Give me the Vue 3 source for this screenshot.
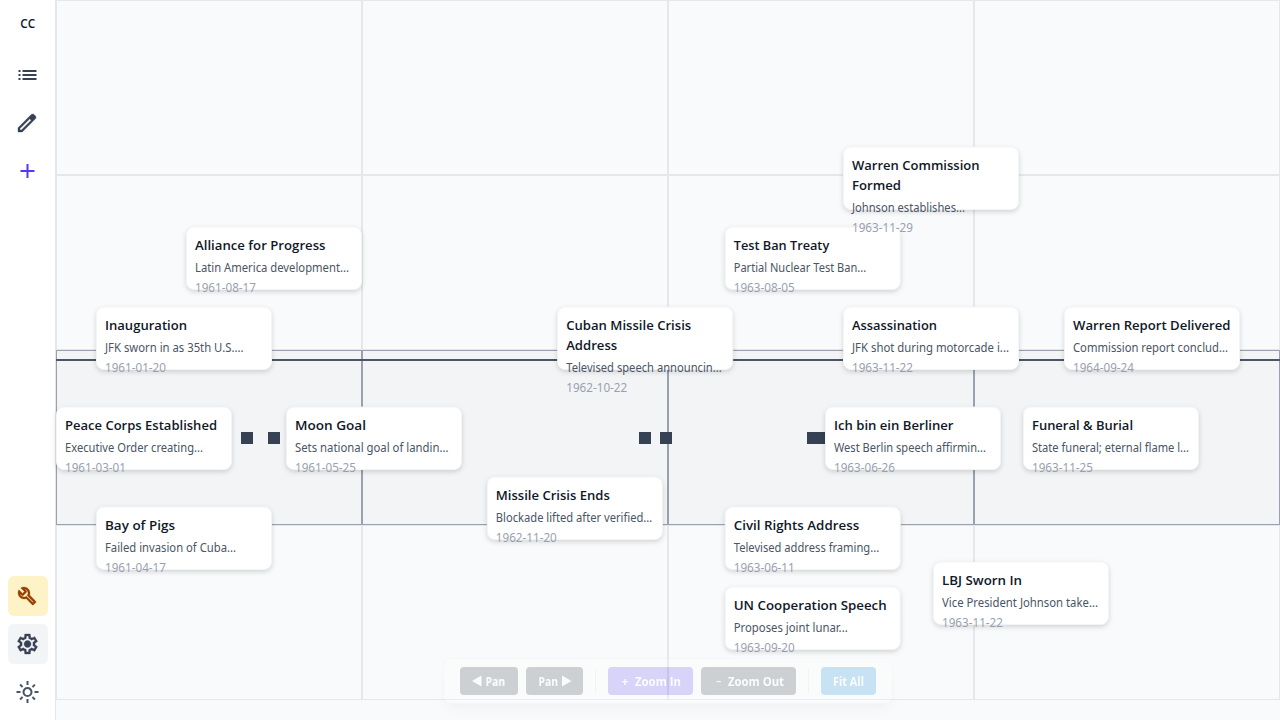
<script setup>
const columns = [0, 306, 612, 918]
const rows = [0, 175, 525]
const markers = [185, 212, 583, 604, 751, 757]

// x / y are canvas coordinates of the card; w values are rendered text widths
const events = [
  { x: 40, y: 306, title: [['Inauguration', 82]], desc: 'JFK sworn in as 35th U.S....', w: 138.5, date: '1961-01-20' },
  { x: 0, y: 406, title: [['Peace Corps Established', 152]], desc: 'Executive Order creating...', w: 138, date: '1961-03-01' },
  { x: 40, y: 506, title: [['Bay of Pigs', 70]], desc: 'Failed invasion of Cuba...', w: 131, date: '1961-04-17' },
  { x: 230, y: 406, title: [['Moon Goal', 71]], desc: 'Sets national goal of landin...', w: 153.5, date: '1961-05-25' },
  { x: 130, y: 226, title: [['Alliance for Progress', 130.5]], desc: 'Latin America development...', w: 154, date: '1961-08-17' },
  { x: 501.2, y: 306, title: [['Cuban Missile Crisis', 125], ['Address', 51]], desc: 'Televised speech announcin...', w: 155.5, date: '1962-10-22' },
  { x: 430.8, y: 476, title: [['Missile Crisis Ends', 114]], desc: 'Blockade lifted after verified...', w: 156.5, date: '1962-11-20' },
  { x: 668.7, y: 506, title: [['Civil Rights Address', 125.5]], desc: 'Televised address framing...', w: 145.5, date: '1963-06-11' },
  { x: 769, y: 406, title: [['Ich bin ein Berliner', 119.5]], desc: 'West Berlin speech affirmin...', w: 152, date: '1963-06-26' },
  { x: 668.7, y: 226, title: [['Test Ban Treaty', 95.5]], desc: 'Partial Nuclear Test Ban...', w: 132.5, date: '1963-08-05' },
  { x: 668.7, y: 586, title: [['UN Cooperation Speech', 153]], desc: 'Proposes joint lunar...', w: 114, date: '1963-09-20' },
  { x: 787, y: 306, title: [['Assassination', 85]], desc: 'JFK shot during motorcade i...', w: 157, date: '1963-11-22' },
  { x: 877, y: 561, title: [['LBJ Sworn In', 80]], desc: 'Vice President Johnson take...', w: 156, date: '1963-11-22' },
  { x: 967, y: 406, title: [['Funeral & Burial', 101]], desc: 'State funeral; eternal flame l...', w: 157, date: '1963-11-25' },
  { x: 787, y: 146, title: [['Warren Commission', 127.5], ['Formed', 49]], desc: 'Johnson establishes...', w: 113, date: '1963-11-29' },
  { x: 1008, y: 306, title: [['Warren Report Delivered', 157.5]], desc: 'Commission report conclud...', w: 155, date: '1964-09-24' },
]
</script>

<template>
  <div class="app">
    <nav class="sidebar">
      <div class="brand"><svg width="40" height="24"><text x="12.3" y="16" textLength="15" lengthAdjust="spacingAndGlyphs">CC</text></svg></div>
      <button class="item"><svg viewBox="0 -960 960 960"><path d="M280-600v-80h560v80H280Zm0 160v-80h560v80H280Zm0 160v-80h560v80H280ZM120-600v-80h80v80h-80Zm0 160v-80h80v80h-80Zm0 160v-80h80v80h-80Z" /></svg></button>
      <button class="item"><svg class="bold" viewBox="0 -960 960 960"><path d="M200-200h57l391-391-57-57-391 391v57Zm-80 80v-170l528-527q12-11 26.5-17t30.5-6q16 0 31 6t26 18l55 56q12 11 17.5 26t5.5 30q0 16-5.5 30.5T817-647L290-120H120Z" /></svg></button>
      <button class="item add"><svg viewBox="0 -960 960 960"><path d="M440-440H200v-80h240v-240h80v240h240v80H520v240h-80v-240Z" /></svg></button>
      <div class="spacer"></div>
      <button class="item tools"><svg class="bold" viewBox="0 -960 960 960"><path d="M686-132 444-376q-20 8-40.5 12t-43.5 4q-100 0-170-70t-70-170q0-36 10-68.5t28-61.5l146 146 72-72-146-146q29-18 61.5-28t68.5-10q100 0 170 70t70 170q0 23-4 43.5T584-516l244 242q12 12 12 29t-12 29l-84 84q-12 12-29 12t-29-12Zm29-85 27-27-256-256q18-20 26-46.5t8-53.5q0-60-38.5-104.5T386-758l74 74q12 12 12 28t-12 28L332-500q-12 12-28 12t-28-12l-74-74q9 57 53.5 95.5T360-440q26 0 52-8t47-25l256 256Z" /></svg></button>
      <button class="item settings"><svg class="bold" viewBox="0 -960 960 960"><path d="m370-80-16-128q-13-5-24.5-12T307-235l-119 50L78-375l103-78q-1-7-1-13.5v-27q0-6.5 1-13.5L78-585l110-190 119 50q11-8 23-15t24-12l16-128h220l16 128q13 5 24.5 12t22.5 15l119-50 110 190-103 78q1 7 1 13.5v27q0 6.5-2 13.5l103 78-110 190-118-50q-11 8-23 15t-24 12L590-80H370Zm70-80h79l14-106q31-8 57.5-23.5T639-327l99 41 39-68-86-65q5-14 7-29.5t2-31.5q0-16-2-31.5t-7-29.5l86-65-39-68-99 42q-22-23-48.5-38.5T533-694l-13-106h-79l-14 106q-31 8-57.5 23.5T321-633l-99-41-39 68 86 64q-5 15-7 30t-2 32q0 16 2 31t7 30l-86 65 39 68 99-42q22 23 48.5 38.5T427-266l13 106Zm42-180q58 0 99-41t41-99q0-58-41-99t-99-41q-59 0-99.5 41T342-480q0 58 40.5 99t99.5 41Z" /></svg></button>
      <button class="item theme"><svg viewBox="0 -960 960 960"><path d="M480-360q50 0 85-35t35-85q0-50-35-85t-85-35q-50 0-85 35t-35 85q0 50 35 85t85 35Zm0 80q-83 0-141.5-58.5T280-480q0-83 58.5-141.5T480-680q83 0 141.5 58.5T680-480q0 83-58.5 141.5T480-280ZM200-440H40v-80h160v80Zm720 0H760v-80h160v80ZM440-760v-160h80v160h-80Zm0 720v-160h80v160h-80ZM256-650l-101-97 57-59 96 100-52 56Zm492 496-97-101 53-55 101 97-57 59Zm-98-550 97-101 59 57-100 96-56-52ZM154-212l101-97 55 53-97 101-59-57Z" /></svg></button>
    </nav>

    <main class="board">
      <svg class="canvas" width="1224" height="720">
        <template v-for="y in rows" :key="'r' + y">
          <rect v-for="x in columns" :key="x" class="cell" :x="x + 0.5" :y="y + 0.5" width="305" height="174" />
        </template>
        <rect v-for="x in columns" :key="'b' + x" class="cell band" :x="x + 0.5" y="350.5" width="305" height="174" />
        <rect class="axis" x="0" y="359" width="1224" height="2" />
        <rect v-for="x in markers" :key="'m' + x" class="marker" :x="x" y="432" width="12" height="12" />
        <g v-for="e in events" :key="e.title[0][0]" :transform="`translate(${e.x} ${e.y})`">
          <rect class="card" x="0.5" y="1" width="175" height="62.5" rx="7.5" />
          <text
            v-for="(line, i) in e.title" :key="i" class="title" x="9" :y="24 + i * 20"
            :textLength="line[1]" lengthAdjust="spacingAndGlyphs"
          >{{ line[0] }}</text>
          <text class="desc" x="9" :y="26 + e.title.length * 20" :textLength="e.w" lengthAdjust="spacingAndGlyphs">{{ e.desc }}</text>
          <text class="date" x="9" :y="45.8 + e.title.length * 20" textLength="61" lengthAdjust="spacingAndGlyphs">{{ e.date }}</text>
        </g>
      </svg>

      <div class="toolbar">
        <button class="btn pan-left"><svg width="34" height="20"><path d="M0 10 9.5 4.5v11Z" /><text x="13.5" y="14.5" textLength="19.5" lengthAdjust="spacingAndGlyphs">Pan</text></svg></button>
        <button class="btn pan-right"><svg width="34" height="20"><text x="0.5" y="14.5" textLength="19.5" lengthAdjust="spacingAndGlyphs">Pan</text><path d="M33.5 10 24 4.5v11Z" /></svg></button>
        <i class="divider"></i>
        <button class="btn zoom-in"><svg width="61" height="20"><text x="1.5" y="14.5">+</text><text x="15" y="14.5" textLength="46" lengthAdjust="spacingAndGlyphs">Zoom In</text></svg></button>
        <button class="btn zoom-out"><svg width="71" height="20"><text class="minus" x="3" y="14">–</text><text x="15" y="14.5" textLength="56" lengthAdjust="spacingAndGlyphs">Zoom Out</text></svg></button>
        <i class="divider"></i>
        <button class="btn fit"><svg width="31" height="20"><text x="0" y="14.5" textLength="31" lengthAdjust="spacingAndGlyphs">Fit All</text></svg></button>
      </div>
    </main>
  </div>
</template>

<style>
body { margin: 0; overflow: hidden; }
</style>

<style scoped>
.app { display: flex; width: 1280px; height: 720px; background: #f9fafb; font-family: "Open Sans", "Noto Sans", sans-serif; }
.sidebar { box-sizing: border-box; width: 56px; height: 720px; padding: 12px 7px 8px 8px; display: flex; flex-direction: column; align-items: flex-start; gap: 8px; background: #fff; border-right: 1px solid #e5e7eb; }
.brand { height: 24px; width: 40px; margin-bottom: 11px; }
.brand text { font-size: 12px; font-weight: 600; fill: #111827; }
svg { display: block; overflow: visible; }
button { border: 0; margin: 0; font: inherit; }
.item { flex: none; width: 40px; height: 40px; padding: 8px 9px 8px 7px; border-radius: 6px; background: transparent; color: #364153; }
.item svg { width: 24px; height: 24px; fill: currentColor; transform: translateX(0.5px); }
.item .bold { stroke: currentColor; stroke-width: 14; transform: none; }
.add { color: #4f39f6; }
.spacer { flex: 1; }
.tools { background: #fef3c6; color: #973c00; }
.settings { background: #f3f4f6; color: #364153; }
.settings .bold { transform: translateX(0.5px); }
.theme { color: #4a5565; }
.board { position: relative; width: 1224px; height: 720px; background: #f9fafb; }
.cell { fill: #f9fafb; stroke: #e5e7eb; }
.band { fill: #f3f4f6; stroke: #99a1af; }
.axis { fill: #4a5565; }
.marker { fill: #364153; }
.card { fill: #fff; stroke: #f3f4f6; stroke-width: 1; filter: drop-shadow(0 2px 2.5px rgb(0 0 0 / 0.15)); }
.title { font-size: 13px; font-weight: 600; fill: #101828; }
.desc { font-family: "Noto Sans", "Open Sans", sans-serif; font-size: 12px; fill: #4a5565; }
.date { font-family: "Noto Sans", "Open Sans", sans-serif; font-size: 12.3px; fill: #99a1af; }
.toolbar { position: absolute; left: 387px; top: 658px; box-sizing: border-box; width: 450px; height: 46px; padding: 8px 16px; display: flex; align-items: center; gap: 8px; background: #fff; border: 1px solid #e5e7eb; border-radius: 8px; box-shadow: 0 10px 15px -3px rgb(0 0 0 / 0.12), 0 4px 6px -4px rgb(0 0 0 / 0.12); opacity: 0.2; }
.btn { flex: none; box-sizing: border-box; display: flex; align-items: center; justify-content: center; height: 28px; padding: 0; border-radius: 4px; background: #1e2939; color: #fff; }
.btn svg { fill: #fff; }
.btn text { font-size: 12px; font-weight: 700; }
.btn .minus { font-weight: 600; font-size: 10.5px; }
.pan-left { width: 58px; }
.pan-right { width: 57px; }
.zoom-in { width: 85px; background: #4f39f6; }
.zoom-out { width: 95px; }
.fit { width: 55px; background: #0084d1; }
.divider { flex: none; width: 1px; height: 24px; margin: 0 4px; background: #d1d5dc; }
</style>
